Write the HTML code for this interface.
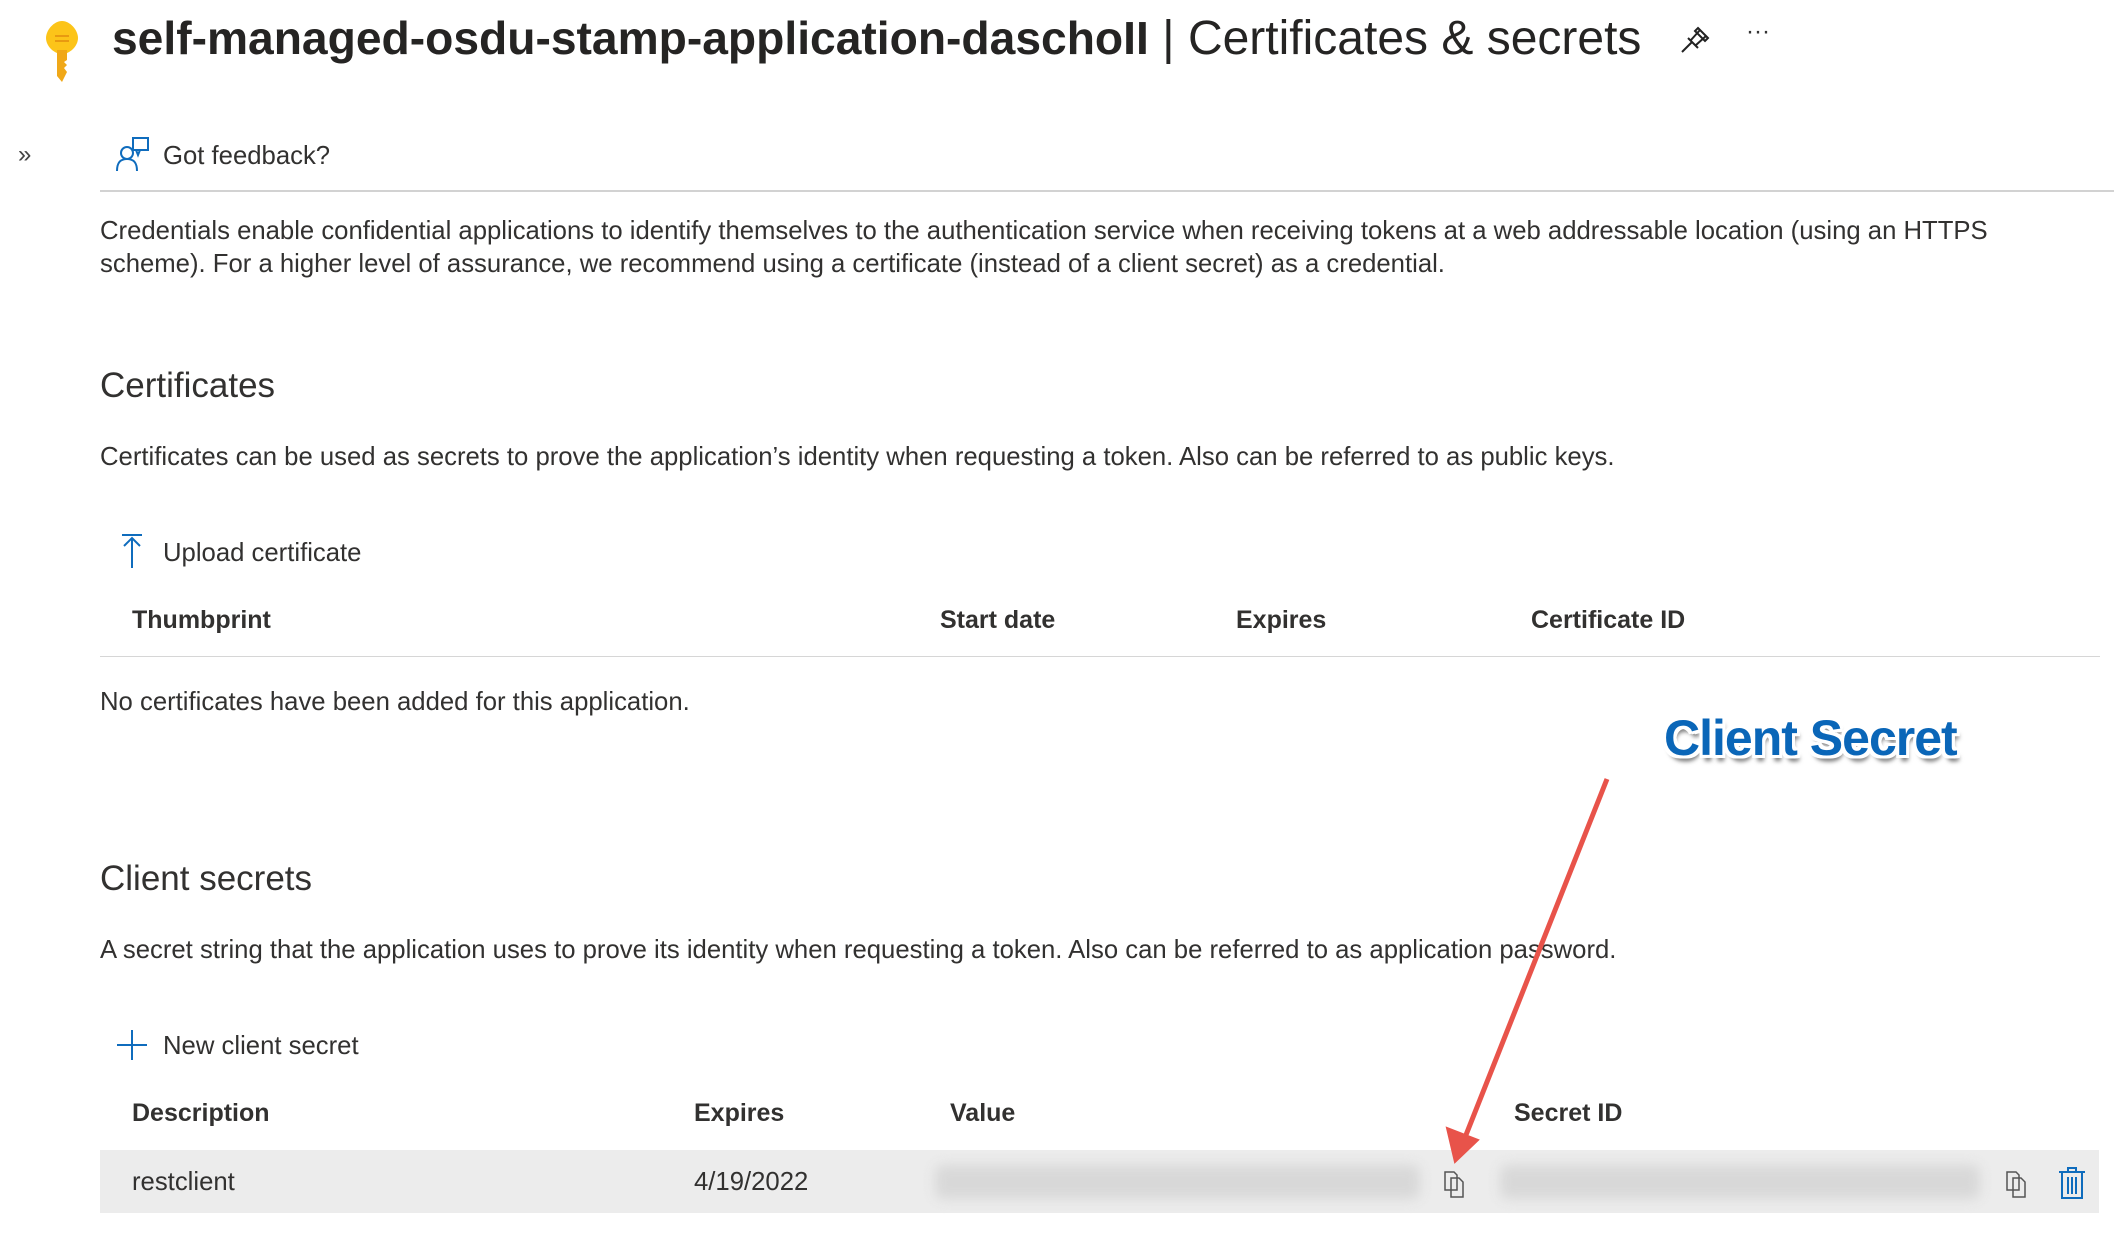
<!DOCTYPE html>
<html><head><meta charset="utf-8"><style>
*{margin:0;padding:0;box-sizing:border-box}
body{width:2114px;height:1236px;background:#fff;position:relative;overflow:hidden;font-family:"Liberation Sans",Arial,sans-serif;color:#323130}
.a{position:absolute;white-space:nowrap}
.t{font-size:25.7px;line-height:30px}
.h{font-size:35px;line-height:40px}
.b{font-weight:bold;font-size:25px;line-height:30px}
.blur{position:absolute;background:#d8d8d8;filter:blur(6px);border-radius:8px}
</style></head><body>
<svg class="a" style="left:42px;top:20px" width="40" height="64" viewBox="0 0 40 64">
<path d="M20 1 C28 1 36 10 36 18 C36 26 28 34 20 34 C12 34 4 26 4 18 C4 10 12 1 20 1 Z" fill="#fcc419"/>
<path d="M15 30 L25 30 L25 40 L22 42 L25 45 L22 48 L25 52 L20 62 L15 56 Z" fill="#f0a818"/>
<rect x="13" y="15" width="14" height="2" fill="#e89a10"/><rect x="13" y="20" width="14" height="2" fill="#e89a10"/>
</svg>
<div class="a" style="left:112px;top:8px;font-size:48px;line-height:60px;color:#252423"><b style="font-size:46.2px">self-managed-osdu-stamp-application-daschoII</b> | Certificates &amp; secrets</div>
<svg class="a" style="left:1680px;top:24px" width="32" height="30" viewBox="0 0 32 30" fill="none" stroke="#222" stroke-width="2">
<path d="M2 28 L12 18 M8 14 L18 24 M11 16 L20 6 M26 12 L16 21 M18 4 L28 14 L25 17 L15 7 Z"/></svg>
<div class="a" style="left:1746px;top:18px;font-size:24px;color:#333">···</div>
<div class="a" style="left:18px;top:141px;font-size:24px;color:#444">»</div>
<svg class="a" style="left:116px;top:136px" width="34" height="36" viewBox="0 0 34 36" fill="none" stroke="#0f6cbd" stroke-width="2">
<rect x="17" y="2" width="15" height="12"/><path d="M24 14 L22 19 L20 14"/><circle cx="11" cy="17" r="6"/><path d="M1 35 C1 26 5 23 11 23 C17 23 21 26 21 35"/></svg>
<div class="a t" style="left:163px;top:141px">Got feedback?</div>
<div class="a" style="left:100px;top:190px;width:2014px;height:2px;background:#d2d2d2"></div>
<div class="a t" style="left:100px;top:216px">Credentials enable confidential applications to identify themselves to the authentication service when receiving tokens at a web addressable location (using an HTTPS</div>
<div class="a t" style="left:100px;top:249px">scheme). For a higher level of assurance, we recommend using a certificate (instead of a client secret) as a credential.</div>
<div class="a h" style="left:100px;top:366px">Certificates</div>
<div class="a t" style="left:100px;top:442px">Certificates can be used as secrets to prove the application’s identity when requesting a token. Also can be referred to as public keys.</div>
<svg class="a" style="left:121px;top:533px" width="22" height="36" viewBox="0 0 22 36" fill="none" stroke="#0f6cbd" stroke-width="2"><path d="M1 2 H21 M11 35 V5 M3 13 L11 5 L19 13"/></svg>
<div class="a t" style="left:163px;top:538px">Upload certificate</div>
<div class="a b" style="left:132px;top:605px">Thumbprint</div>
<div class="a b" style="left:940px;top:605px">Start date</div>
<div class="a b" style="left:1236px;top:605px">Expires</div>
<div class="a b" style="left:1531px;top:605px">Certificate ID</div>
<div class="a" style="left:100px;top:656px;width:2000px;height:1px;background:#d6d6d6"></div>
<div class="a t" style="left:100px;top:687px">No certificates have been added for this application.</div>
<div class="a h" style="left:100px;top:859px">Client secrets</div>
<div class="a t" style="left:100px;top:935px">A secret string that the application uses to prove its identity when requesting a token. Also can be referred to as application password.</div>
<svg class="a" style="left:117px;top:1030px" width="30" height="30" viewBox="0 0 30 30" stroke="#0f6cbd" stroke-width="2"><path d="M15 0 V30 M0 15 H30"/></svg>
<div class="a t" style="left:163px;top:1031px">New client secret</div>
<div class="a b" style="left:132px;top:1098px">Description</div>
<div class="a b" style="left:694px;top:1098px">Expires</div>
<div class="a b" style="left:950px;top:1098px">Value</div>
<div class="a b" style="left:1514px;top:1098px">Secret ID</div>
<div class="a" style="left:100px;top:1150px;width:1999px;height:63px;background:#ececec"></div>
<div class="a t" style="left:132px;top:1167px">restclient</div>
<div class="a t" style="left:694px;top:1167px">4/19/2022</div>
<div class="blur" style="left:935px;top:1165px;width:485px;height:34px"></div>
<div class="blur" style="left:1500px;top:1165px;width:480px;height:34px"></div>
<svg class="a" style="left:1443px;top:1170px" width="24" height="28" viewBox="0 0 24 28" fill="none" stroke="#555" stroke-width="1.5"><path d="M2 2 H11 L14 5 V20 H2 Z M8 8 H16 L20 12 V27 H8 Z"/></svg>
<svg class="a" style="left:2005px;top:1170px" width="24" height="28" viewBox="0 0 24 28" fill="none" stroke="#555" stroke-width="1.5"><path d="M2 2 H11 L14 5 V20 H2 Z M8 8 H16 L20 12 V27 H8 Z"/></svg>
<svg class="a" style="left:2058px;top:1166px" width="28" height="34" viewBox="0 0 28 34" fill="none" stroke="#0f6cbd" stroke-width="2"><path d="M1 6 H27 M10 6 V2 H18 V6 M4 6 V32 H24 V6 M10 11 V28 M14 11 V28 M18 11 V28"/></svg>
<svg class="a" style="left:0;top:0" width="2114" height="1236"><g stroke="#e8534a" stroke-width="5" fill="#e8534a"><line x1="1607" y1="779" x2="1462" y2="1145"/><path d="M1455 1162 L1447 1128 L1478 1140 Z" stroke-width="2"/></g></svg>
<div class="a" style="left:1664px;top:708px;font-size:50px;line-height:60px;font-weight:bold;color:#0a66b8;text-shadow:-3px -3px 0 #fff,3px -3px 0 #fff,-3px 3px 0 #fff,3px 3px 0 #fff,0 3px 0 #fff,0 -3px 0 #fff,3px 0 0 #fff,-3px 0 0 #fff,2px 6px 4px #777;letter-spacing:-1px">Client Secret</div>
</body></html>
